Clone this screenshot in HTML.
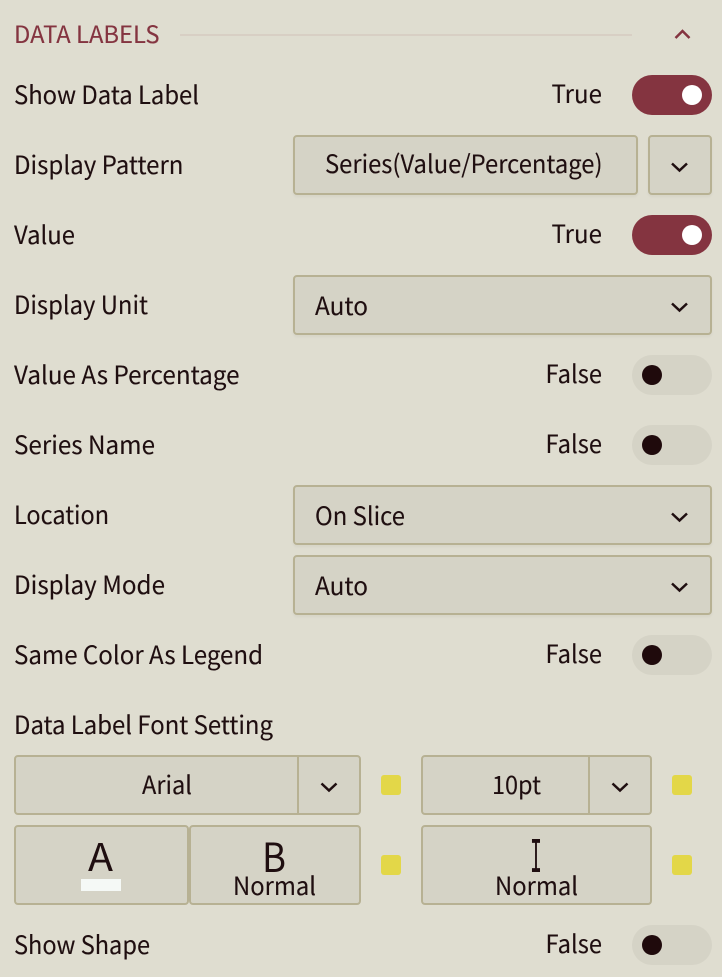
<!DOCTYPE html>
<html><head><meta charset="utf-8">
<style>
html,body{margin:0;padding:0;background:#dfddd0;width:722px;height:977px;overflow:hidden}
svg{display:block}
text{font-family:"Noto Sans CJK SC","Liberation Sans",sans-serif;font-size:25px;fill:#1f0e10;stroke:#1f0e10;stroke-width:.12px}
.b{fill:#d5d3c6;stroke:#b7b193;stroke-width:2}
.d{filter:drop-shadow(0 2px 1px rgba(0,0,0,.035))}
.c{fill:none;stroke:#1f0e10;stroke-width:2.5}
.off{fill:#d5d3c6}.on{fill:#843440}.y{fill:#e3d748}
</style></head><body>
<svg width="722" height="977" viewBox="0 0 722 977" xmlns="http://www.w3.org/2000/svg">
<rect width="722" height="977" fill="#dfddd0"/>
<text x="14" y="43" textLength="145.500" lengthAdjust="spacingAndGlyphs" style="fill:#843440;stroke:#843440;font-size:24px">DATA LABELS</text>
<rect x="180" y="34" width="452" height="2" fill="#d8cfc4"/>
<path d="M675.500 38 L682.500 31 L689.500 38" fill="none" stroke="#843440" stroke-width="2.500"/>

<text x="14" y="104" textLength="185" lengthAdjust="spacingAndGlyphs">Show Data Label</text>
<text x="551.500" y="103" textLength="50.500" lengthAdjust="spacingAndGlyphs">True</text>
<rect x="632" y="75" width="80" height="40" rx="20" class="on"/><circle cx="692" cy="95" r="10" fill="#fff"/>

<text x="14" y="174" textLength="169.500" lengthAdjust="spacingAndGlyphs">Display Pattern</text>
<rect x="294" y="136" width="343" height="58" rx="3" class="b d"/>
<text x="325" y="173" textLength="277.500" lengthAdjust="spacingAndGlyphs">Series(Value/Percentage)</text>
<rect x="649" y="136" width="62" height="58" rx="3" class="b d"/>
<path d="M672 163.500 L679.500 170.500 L687 163.500" class="c"/>

<text x="14" y="244" textLength="61" lengthAdjust="spacingAndGlyphs">Value</text>
<text x="551.500" y="243" textLength="50.500" lengthAdjust="spacingAndGlyphs">True</text>
<rect x="632" y="215" width="80" height="40" rx="20" class="on"/><circle cx="692" cy="235" r="10" fill="#fff"/>

<text x="14" y="314" textLength="134" lengthAdjust="spacingAndGlyphs">Display Unit</text>
<rect x="294" y="276" width="417" height="58" rx="3" class="b d"/>
<text x="315" y="315" textLength="53" lengthAdjust="spacingAndGlyphs">Auto</text>
<path d="M672 303.500 L679.500 310.500 L687 303.500" class="c"/>

<text x="14" y="384" textLength="225.500" lengthAdjust="spacingAndGlyphs">Value As Percentage</text>
<text x="545.500" y="383" textLength="56.500" lengthAdjust="spacingAndGlyphs">False</text>
<rect x="632" y="355" width="80" height="40" rx="20" class="off"/><circle cx="652" cy="375" r="10" fill="#1f0a0c"/>

<text x="14" y="454" textLength="141" lengthAdjust="spacingAndGlyphs">Series Name</text>
<text x="545.500" y="453" textLength="56.500" lengthAdjust="spacingAndGlyphs">False</text>
<rect x="632" y="425" width="80" height="40" rx="20" class="off"/><circle cx="652" cy="445" r="10" fill="#1f0a0c"/>

<text x="14" y="524" textLength="95" lengthAdjust="spacingAndGlyphs">Location</text>
<rect x="294" y="486" width="417" height="58" rx="3" class="b d"/>
<text x="315" y="525" textLength="90" lengthAdjust="spacingAndGlyphs">On Slice</text>
<path d="M672 513.500 L679.500 520.500 L687 513.500" class="c"/>

<text x="14" y="594" textLength="151" lengthAdjust="spacingAndGlyphs">Display Mode</text>
<rect x="294" y="556" width="417" height="58" rx="3" class="b d"/>
<text x="315" y="595" textLength="53" lengthAdjust="spacingAndGlyphs">Auto</text>
<path d="M672 583.500 L679.500 590.500 L687 583.500" class="c"/>

<text x="14" y="664" textLength="249" lengthAdjust="spacingAndGlyphs">Same Color As Legend</text>
<text x="545.500" y="663" textLength="56.500" lengthAdjust="spacingAndGlyphs">False</text>
<rect x="632" y="635" width="80" height="40" rx="20" class="off"/><circle cx="652" cy="655" r="10" fill="#1f0a0c"/>

<text x="14" y="734" textLength="259" lengthAdjust="spacingAndGlyphs">Data Label Font Setting</text>

<rect x="15" y="756" width="345" height="58" rx="3" class="b"/>
<rect x="297" y="756" width="2" height="58" fill="#b7b193"/>
<text x="142" y="794" textLength="50" lengthAdjust="spacingAndGlyphs">Arial</text>
<path d="M321.500 783.500 L329 790.500 L336.500 783.500" class="c"/>
<rect x="381" y="775" width="20" height="20" rx="3" class="y"/>

<rect x="422" y="756" width="229" height="58" rx="3" class="b"/>
<rect x="588" y="756" width="2" height="58" fill="#b7b193"/>
<text x="492" y="794" textLength="49" lengthAdjust="spacingAndGlyphs">10pt</text>
<path d="M612.500 783.500 L620 790.500 L627.500 783.500" class="c"/>
<rect x="672" y="775" width="20" height="20" rx="3" class="y"/>

<rect x="15" y="826" width="173" height="78" rx="3" class="b"/>
<text x="88" y="871" textLength="25" lengthAdjust="spacingAndGlyphs" style="font-size:38px;stroke-width:0">A</text>
<rect x="81" y="879" width="40" height="12" fill="#f5f9f6"/>

<rect x="190" y="826" width="170" height="78" rx="3" class="b"/>
<text x="262" y="872" textLength="24" lengthAdjust="spacingAndGlyphs" style="font-size:40px;stroke-width:0">B</text>
<text x="233" y="895" textLength="83" lengthAdjust="spacingAndGlyphs">Normal</text>
<rect x="381" y="855" width="20" height="20" rx="3" class="y"/>

<rect x="422" y="826" width="229" height="78" rx="3" class="b"/>
<text x="530" y="872" textLength="12" lengthAdjust="spacingAndGlyphs" style="font-family:'Liberation Mono',monospace;font-size:50px;stroke-width:0">I</text>
<text x="495" y="895" textLength="83" lengthAdjust="spacingAndGlyphs">Normal</text>
<rect x="672" y="855" width="20" height="20" rx="3" class="y"/>

<text x="14" y="954" textLength="136" lengthAdjust="spacingAndGlyphs">Show Shape</text>
<text x="545.500" y="953" textLength="56.500" lengthAdjust="spacingAndGlyphs">False</text>
<rect x="632" y="925" width="80" height="40" rx="20" class="off"/><circle cx="652" cy="945" r="10" fill="#1f0a0c"/>
</svg>
</body></html>
